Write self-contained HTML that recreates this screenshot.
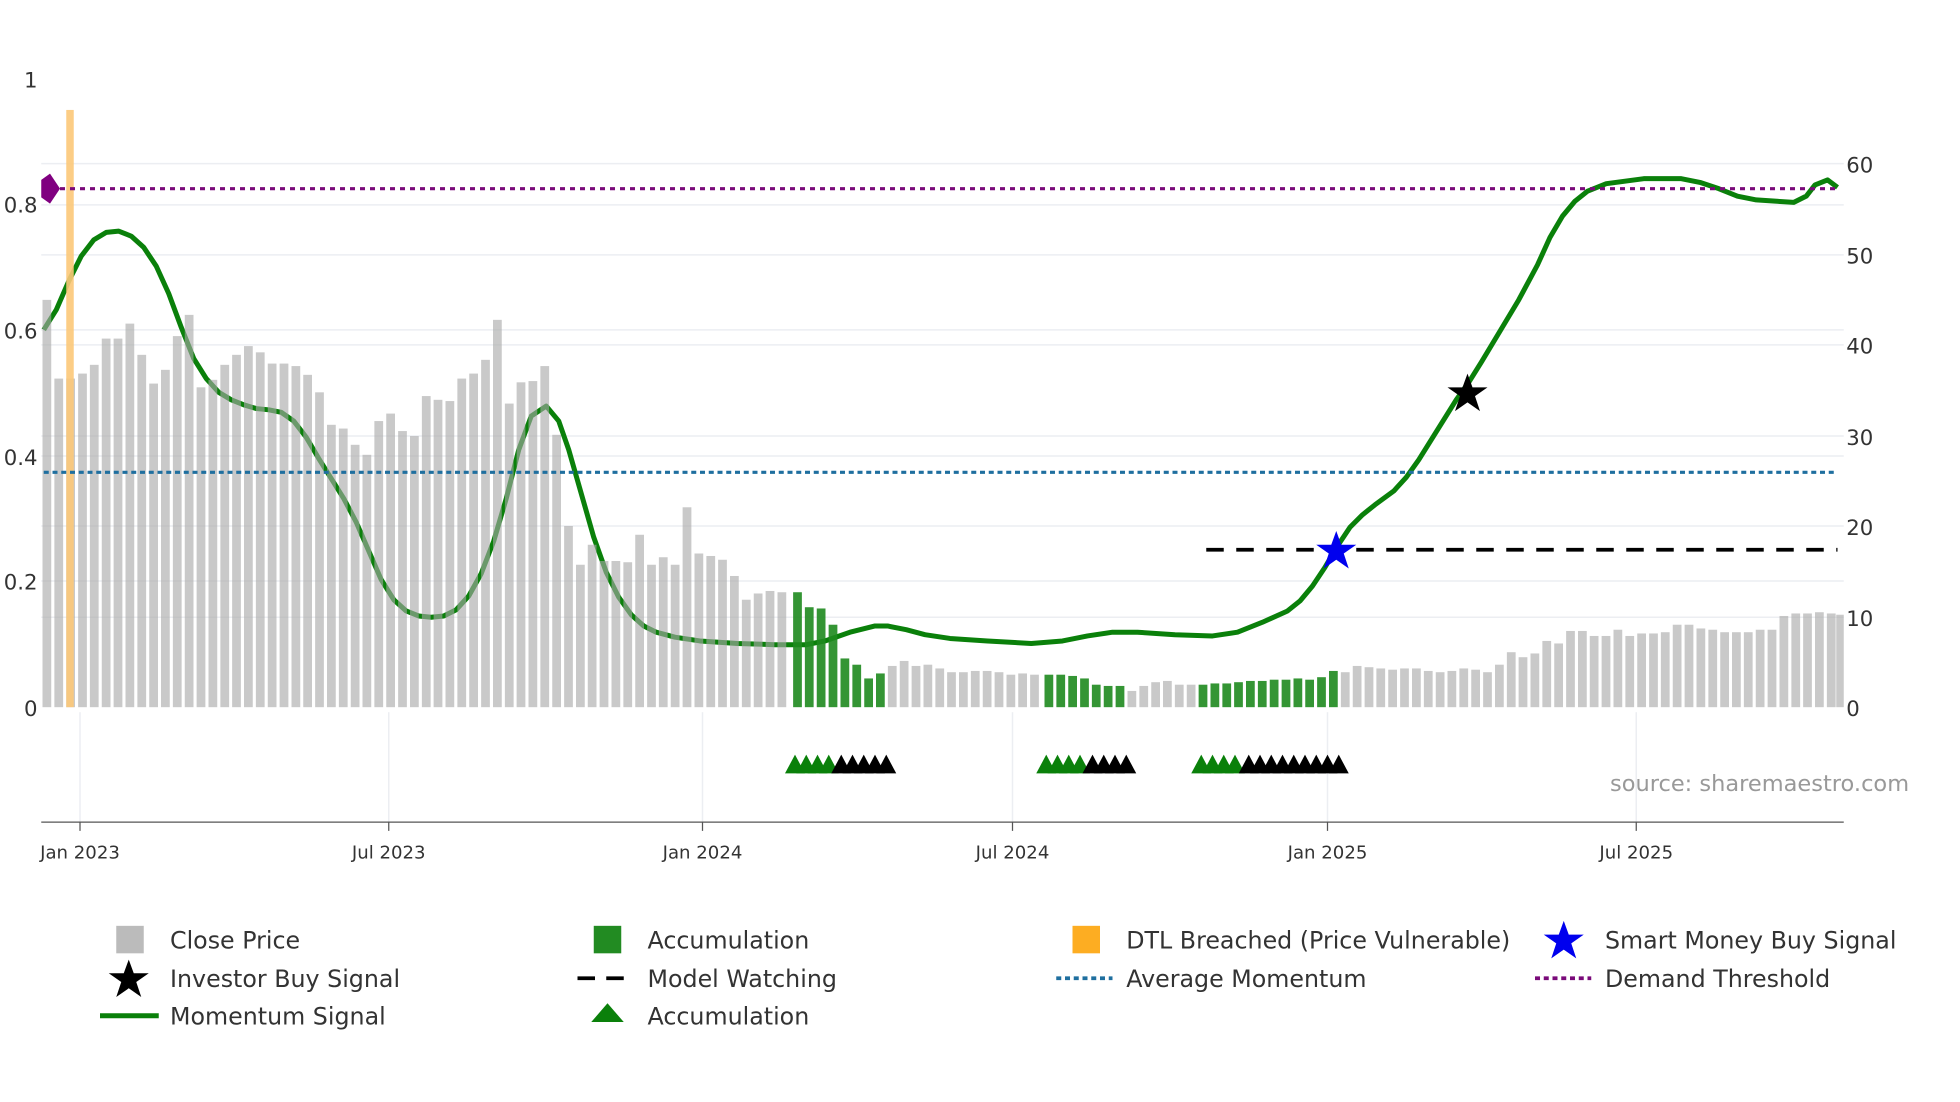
<!DOCTYPE html>
<html><head><meta charset="utf-8"><style>
html,body{margin:0;padding:0;background:#fff;}
svg{display:block;font-family:"DejaVu Sans","Liberation Sans",sans-serif;}
.g{fill:#a8a8a8;opacity:.62}.a{fill:#1e8a1e;opacity:.9}
</style></head><body>
<svg width="1960" height="1102" viewBox="0 0 1568 882" preserveAspectRatio="none" xmlns="http://www.w3.org/2000/svg">
<rect width="1568" height="882" fill="#fff"/>
<g stroke="#eceef2" stroke-width="1.2">
<line x1="33" x2="1475" y1="131" y2="131"/><line x1="33" x2="1475" y1="164" y2="164"/>
<line x1="33" x2="1475" y1="204" y2="204"/><line x1="33" x2="1475" y1="264" y2="264"/>
<line x1="33" x2="1475" y1="276" y2="276"/><line x1="33" x2="1475" y1="349" y2="349"/>
<line x1="33" x2="1475" y1="365" y2="365"/><line x1="33" x2="1475" y1="421" y2="421"/>
<line x1="33" x2="1475" y1="465" y2="465"/><line x1="33" x2="1475" y1="494" y2="494"/>
<line x1="64" x2="64" y1="570" y2="658"/><line x1="311" x2="311" y1="570" y2="658"/>
<line x1="562" x2="562" y1="570" y2="658"/><line x1="810" x2="810" y1="570" y2="658"/>
<line x1="1062" x2="1062" y1="570" y2="658"/><line x1="1309" x2="1309" y1="570" y2="658"/>
</g>
<path fill="none" stroke="#0a800a" stroke-width="4" stroke-linejoin="round" d="M35,264 L45,248 55,225 65,205 75,192 85,186 95,185 105,189 115,198 125,213 135,235 145,262 155,287 165,303 175,314 185,320 195,324 205,327 215,328 225,330 235,337 245,350 255,367 265,383 275,399 285,418 295,441 305,464 315,480 325,489 335,493 345,494 355,493 365,488 375,477 385,459 395,433 405,399 415,360 425,333 437,325 447,337 455,360 465,395 475,430 485,458 495,478 505,492 515,501 525,506 540,510 560,513 590,515 620,516 645,516 660,513 680,506 700,501 710,501 725,504 740,508 760,511 790,513 825,515 850,513 870,509 890,506 910,506 940,508 970,509 990,506 1010,498 1030,489 1040,481 1050,469 1060,454 1070,437 1080,422 1090,412 1100,404 1115,393 1125,382 1135,368 1145,352 1155,336 1165,320 1175,306 1185,290 1200,265 1215,240 1230,212 1240,190 1250,173 1260,161 1270,153 1285,147 1300,145 1315,143 1330,143 1345,143 1360,146 1375,151 1390,157 1405,160 1420,161 1435,162 1445,157 1452,148 1462,144 1470,150"/>
<g>
<rect class="g" width="7" x="34.0" y="240" height="326"/>
<rect class="g" width="7" x="43.5" y="303" height="263"/>
<rect class="g" width="7" x="53.0" y="303" height="263"/>
<rect class="g" width="7" x="62.5" y="299" height="267"/>
<rect class="g" width="7" x="71.9" y="292" height="274"/>
<rect class="g" width="7" x="81.4" y="271" height="295"/>
<rect class="g" width="7" x="90.9" y="271" height="295"/>
<rect class="g" width="7" x="100.4" y="259" height="307"/>
<rect class="g" width="7" x="109.9" y="284" height="282"/>
<rect class="g" width="7" x="119.4" y="307" height="259"/>
<rect class="g" width="7" x="128.8" y="296" height="270"/>
<rect class="g" width="7" x="138.3" y="269" height="297"/>
<rect class="g" width="7" x="147.8" y="252" height="314"/>
<rect class="g" width="7" x="157.3" y="310" height="256"/>
<rect class="g" width="7" x="166.8" y="304" height="262"/>
<rect class="g" width="7" x="176.3" y="292" height="274"/>
<rect class="g" width="7" x="185.7" y="284" height="282"/>
<rect class="g" width="7" x="195.2" y="277" height="289"/>
<rect class="g" width="7" x="204.7" y="282" height="284"/>
<rect class="g" width="7" x="214.2" y="291" height="275"/>
<rect class="g" width="7" x="223.7" y="291" height="275"/>
<rect class="g" width="7" x="233.2" y="293" height="273"/>
<rect class="g" width="7" x="242.6" y="300" height="266"/>
<rect class="g" width="7" x="252.1" y="314" height="252"/>
<rect class="g" width="7" x="261.6" y="340" height="226"/>
<rect class="g" width="7" x="271.1" y="343" height="223"/>
<rect class="g" width="7" x="280.6" y="356" height="210"/>
<rect class="g" width="7" x="290.0" y="364" height="202"/>
<rect class="g" width="7" x="299.5" y="337" height="229"/>
<rect class="g" width="7" x="309.0" y="331" height="235"/>
<rect class="g" width="7" x="318.5" y="345" height="221"/>
<rect class="g" width="7" x="328.0" y="349" height="217"/>
<rect class="g" width="7" x="337.5" y="317" height="249"/>
<rect class="g" width="7" x="346.9" y="320" height="246"/>
<rect class="g" width="7" x="356.4" y="321" height="245"/>
<rect class="g" width="7" x="365.9" y="303" height="263"/>
<rect class="g" width="7" x="375.4" y="299" height="267"/>
<rect class="g" width="7" x="384.9" y="288" height="278"/>
<rect class="g" width="7" x="394.4" y="256" height="310"/>
<rect class="g" width="7" x="403.9" y="323" height="243"/>
<rect class="g" width="7" x="413.3" y="306" height="260"/>
<rect class="g" width="7" x="422.8" y="305" height="261"/>
<rect class="g" width="7" x="432.3" y="293" height="273"/>
<rect class="g" width="7" x="441.8" y="348" height="218"/>
<rect class="g" width="7" x="451.3" y="421" height="145"/>
<rect class="g" width="7" x="460.8" y="452" height="114"/>
<rect class="g" width="7" x="470.2" y="436" height="130"/>
<rect class="g" width="7" x="479.7" y="449" height="117"/>
<rect class="g" width="7" x="489.2" y="449" height="117"/>
<rect class="g" width="7" x="498.7" y="450" height="116"/>
<rect class="g" width="7" x="508.2" y="428" height="138"/>
<rect class="g" width="7" x="517.7" y="452" height="114"/>
<rect class="g" width="7" x="527.1" y="446" height="120"/>
<rect class="g" width="7" x="536.6" y="452" height="114"/>
<rect class="g" width="7" x="546.1" y="406" height="160"/>
<rect class="g" width="7" x="555.6" y="443" height="123"/>
<rect class="g" width="7" x="565.1" y="445" height="121"/>
<rect class="g" width="7" x="574.5" y="448" height="118"/>
<rect class="g" width="7" x="584.0" y="461" height="105"/>
<rect class="g" width="7" x="593.5" y="480" height="86"/>
<rect class="g" width="7" x="603.0" y="475" height="91"/>
<rect class="g" width="7" x="612.5" y="473" height="93"/>
<rect class="g" width="7" x="622.0" y="474" height="92"/>
<rect class="a" width="7" x="634.5" y="474" height="92"/>
<rect class="a" width="7" x="643.9" y="486" height="80"/>
<rect class="a" width="7" x="653.4" y="487" height="79"/>
<rect class="a" width="7" x="662.9" y="500" height="66"/>
<rect class="a" width="7" x="672.4" y="527" height="39"/>
<rect class="a" width="7" x="681.9" y="532" height="34"/>
<rect class="a" width="7" x="691.4" y="543" height="23"/>
<rect class="a" width="7" x="700.8" y="539" height="27"/>
<rect class="g" width="7" x="710.3" y="533" height="33"/>
<rect class="g" width="7" x="719.8" y="529" height="37"/>
<rect class="g" width="7" x="729.3" y="533" height="33"/>
<rect class="g" width="7" x="738.8" y="532" height="34"/>
<rect class="g" width="7" x="748.3" y="535" height="31"/>
<rect class="g" width="7" x="757.7" y="538" height="28"/>
<rect class="g" width="7" x="767.2" y="538" height="28"/>
<rect class="g" width="7" x="776.7" y="537" height="29"/>
<rect class="g" width="7" x="786.2" y="537" height="29"/>
<rect class="g" width="7" x="795.7" y="538" height="28"/>
<rect class="g" width="7" x="805.2" y="540" height="26"/>
<rect class="g" width="7" x="814.6" y="539" height="27"/>
<rect class="g" width="7" x="824.1" y="540" height="26"/>
<rect class="a" width="7" x="835.6" y="540" height="26"/>
<rect class="a" width="7" x="845.1" y="540" height="26"/>
<rect class="a" width="7" x="854.6" y="541" height="25"/>
<rect class="a" width="7" x="864.1" y="543" height="23"/>
<rect class="a" width="7" x="873.5" y="548" height="18"/>
<rect class="a" width="7" x="883.0" y="549" height="17"/>
<rect class="a" width="7" x="892.5" y="549" height="17"/>
<rect class="g" width="7" x="902.0" y="553" height="13"/>
<rect class="g" width="7" x="911.5" y="549" height="17"/>
<rect class="g" width="7" x="921.0" y="546" height="20"/>
<rect class="g" width="7" x="930.4" y="545" height="21"/>
<rect class="g" width="7" x="939.9" y="548" height="18"/>
<rect class="g" width="7" x="949.4" y="548" height="18"/>
<rect class="a" width="7" x="958.9" y="548" height="18"/>
<rect class="a" width="7" x="968.4" y="547" height="19"/>
<rect class="a" width="7" x="977.9" y="547" height="19"/>
<rect class="a" width="7" x="987.3" y="546" height="20"/>
<rect class="a" width="7" x="996.8" y="545" height="21"/>
<rect class="a" width="7" x="1006.3" y="545" height="21"/>
<rect class="a" width="7" x="1015.8" y="544" height="22"/>
<rect class="a" width="7" x="1025.3" y="544" height="22"/>
<rect class="a" width="7" x="1034.8" y="543" height="23"/>
<rect class="a" width="7" x="1044.2" y="544" height="22"/>
<rect class="a" width="7" x="1053.7" y="542" height="24"/>
<rect class="a" width="7" x="1063.2" y="537" height="29"/>
<rect class="g" width="7" x="1072.7" y="538" height="28"/>
<rect class="g" width="7" x="1082.2" y="533" height="33"/>
<rect class="g" width="7" x="1091.7" y="534" height="32"/>
<rect class="g" width="7" x="1101.1" y="535" height="31"/>
<rect class="g" width="7" x="1110.6" y="536" height="30"/>
<rect class="g" width="7" x="1120.1" y="535" height="31"/>
<rect class="g" width="7" x="1129.6" y="535" height="31"/>
<rect class="g" width="7" x="1139.1" y="537" height="29"/>
<rect class="g" width="7" x="1148.6" y="538" height="28"/>
<rect class="g" width="7" x="1158.0" y="537" height="29"/>
<rect class="g" width="7" x="1167.5" y="535" height="31"/>
<rect class="g" width="7" x="1177.0" y="536" height="30"/>
<rect class="g" width="7" x="1186.5" y="538" height="28"/>
<rect class="g" width="7" x="1196.0" y="532" height="34"/>
<rect class="g" width="7" x="1205.5" y="522" height="44"/>
<rect class="g" width="7" x="1214.9" y="526" height="40"/>
<rect class="g" width="7" x="1224.4" y="523" height="43"/>
<rect class="g" width="7" x="1233.9" y="513" height="53"/>
<rect class="g" width="7" x="1243.4" y="515" height="51"/>
<rect class="g" width="7" x="1252.9" y="505" height="61"/>
<rect class="g" width="7" x="1262.4" y="505" height="61"/>
<rect class="g" width="7" x="1271.8" y="509" height="57"/>
<rect class="g" width="7" x="1281.3" y="509" height="57"/>
<rect class="g" width="7" x="1290.8" y="504" height="62"/>
<rect class="g" width="7" x="1300.3" y="509" height="57"/>
<rect class="g" width="7" x="1309.8" y="507" height="59"/>
<rect class="g" width="7" x="1319.3" y="507" height="59"/>
<rect class="g" width="7" x="1328.7" y="506" height="60"/>
<rect class="g" width="7" x="1338.2" y="500" height="66"/>
<rect class="g" width="7" x="1347.7" y="500" height="66"/>
<rect class="g" width="7" x="1357.2" y="503" height="63"/>
<rect class="g" width="7" x="1366.7" y="504" height="62"/>
<rect class="g" width="7" x="1376.2" y="506" height="60"/>
<rect class="g" width="7" x="1385.6" y="506" height="60"/>
<rect class="g" width="7" x="1395.1" y="506" height="60"/>
<rect class="g" width="7" x="1404.6" y="504" height="62"/>
<rect class="g" width="7" x="1414.1" y="504" height="62"/>
<rect class="g" width="7" x="1423.6" y="493" height="73"/>
<rect class="g" width="7" x="1433.1" y="491" height="75"/>
<rect class="g" width="7" x="1442.5" y="491" height="75"/>
<rect class="g" width="7" x="1452.0" y="490" height="76"/>
<rect class="g" width="7" x="1461.5" y="491" height="75"/>
<rect class="g" width="6" x="1469.0" y="492" height="74"/>
</g>
<rect x="53" y="88" width="6" height="478" fill="#fcc878" opacity="0.9"/>
<line x1="40" x2="1470" y1="151" y2="151" stroke="#7a0a7a" stroke-width="2.5" stroke-dasharray="4,4"/>
<path d="M40,139 L48,151 40,163 33,158 33,144Z" fill="#800080"/>
<line x1="35" x2="1470" y1="378" y2="378" stroke="#1f6f9f" stroke-width="2.5" stroke-dasharray="4,3"/>
<line x1="965" x2="1470" y1="440" y2="440" stroke="#000" stroke-width="3" stroke-dasharray="14,10"/>
<g>
<path d="M636,604 L644,619 628,619Z" fill="#0a800a"/><path d="M645,604 L653,619 637,619Z" fill="#0a800a"/><path d="M654,604 L662,619 646,619Z" fill="#0a800a"/><path d="M663,604 L671,619 655,619Z" fill="#0a800a"/>
<path d="M673,604 L681,619 665,619Z"/><path d="M682,604 L690,619 674,619Z"/><path d="M691,604 L699,619 683,619Z"/><path d="M700,604 L708,619 692,619Z"/><path d="M709,604 L717,619 701,619Z"/>
<path d="M837,604 L845,619 829,619Z" fill="#0a800a"/><path d="M846,604 L854,619 838,619Z" fill="#0a800a"/><path d="M855,604 L863,619 847,619Z" fill="#0a800a"/><path d="M864,604 L872,619 856,619Z" fill="#0a800a"/>
<path d="M874,604 L882,619 866,619Z"/><path d="M883,604 L891,619 875,619Z"/><path d="M892,604 L900,619 884,619Z"/><path d="M901,604 L909,619 893,619Z"/>
<path d="M961,604 L969,619 953,619Z" fill="#0a800a"/><path d="M970,604 L978,619 962,619Z" fill="#0a800a"/><path d="M979,604 L987,619 971,619Z" fill="#0a800a"/><path d="M988,604 L996,619 980,619Z" fill="#0a800a"/>
<path d="M999,604 L1007,619 991,619Z"/><path d="M1008,604 L1016,619 1000,619Z"/><path d="M1017,604 L1025,619 1009,619Z"/><path d="M1026,604 L1034,619 1018,619Z"/><path d="M1035,604 L1043,619 1027,619Z"/><path d="M1044,604 L1052,619 1036,619Z"/><path d="M1053,604 L1061,619 1045,619Z"/><path d="M1062,604 L1070,619 1054,619Z"/><path d="M1071,604 L1079,619 1063,619Z"/>
</g>
<path fill="#000" d="M1174,299 L1178,310 1190,310 1180,317 1184,329 1174,322 1164,329 1168,317 1158,310 1170,310Z"/>
<path fill="#0000ee" d="M1069,425 L1073,436 1085,436 1075,443 1079,455 1069,448 1059,455 1063,443 1053,436 1065,436Z"/>
<line x1="33" x2="1475" y1="658" y2="658" stroke="#555" stroke-width="1"/>
<g stroke="#555"><line x1="64" x2="64" y1="658" y2="665"/><line x1="311" x2="311" y1="658" y2="665"/><line x1="562" x2="562" y1="658" y2="665"/><line x1="810" x2="810" y1="658" y2="665"/><line x1="1062" x2="1062" y1="658" y2="665"/><line x1="1309" x2="1309" y1="658" y2="665"/></g>
<g fill="#333" font-size="17">
<text x="30" y="70" text-anchor="end">1</text>
<text x="30" y="170" text-anchor="end">0.8</text>
<text x="30" y="271" text-anchor="end">0.6</text>
<text x="30" y="372" text-anchor="end">0.4</text>
<text x="30" y="472" text-anchor="end">0.2</text>
<text x="30" y="573" text-anchor="end">0</text>
<text x="1477" y="138">60</text><text x="1477" y="211">50</text><text x="1477" y="283">40</text>
<text x="1477" y="356">30</text><text x="1477" y="428">20</text><text x="1477" y="501">10</text><text x="1477" y="573">0</text>
</g>
<g fill="#333" font-size="14.5" text-anchor="middle">
<text x="64" y="687">Jan 2023</text><text x="311" y="687">Jul 2023</text><text x="562" y="687">Jan 2024</text>
<text x="810" y="687">Jul 2024</text><text x="1062" y="687">Jan 2025</text><text x="1309" y="687">Jul 2025</text>
</g>
<text x="1288" y="633" fill="#999" font-size="18">source: sharemaestro.com</text>
<g font-size="19" fill="#333">
<rect x="93" y="741" width="22" height="22" fill="#bbb"/><text x="136" y="759">Close Price</text>
<rect x="475" y="741" width="22" height="22" fill="#228b22"/><text x="518" y="759">Accumulation</text>
<rect x="858" y="741" width="22" height="22" fill="#fdad22"/><text x="901" y="759">DTL Breached (Price Vulnerable)</text>
<path fill="#0000ee" d="M1251,737 L1255,748 1267,748 1257,755 1261,767 1251,760 1241,767 1245,755 1235,748 1247,748Z"/><text x="1284" y="759">Smart Money Buy Signal</text>
<path fill="#000" d="M103,768 L107,779 119,779 109,786 113,798 103,791 93,798 97,786 87,779 99,779Z"/><text x="136" y="790">Investor Buy Signal</text>
<line x1="462" x2="508" y1="783" y2="783" stroke="#000" stroke-width="3" stroke-dasharray="14,9"/><text x="518" y="790">Model Watching</text>
<line x1="845" x2="890" y1="783" y2="783" stroke="#1f6f9f" stroke-width="3" stroke-dasharray="4,3"/><text x="901" y="790">Average Momentum</text>
<line x1="1228" x2="1273" y1="783" y2="783" stroke="#7a0a7a" stroke-width="3" stroke-dasharray="4,3"/><text x="1284" y="790">Demand Threshold</text>
<line x1="80" x2="127" y1="813" y2="813" stroke="#0a800a" stroke-width="4"/><text x="136" y="820">Momentum Signal</text>
<path d="M486,803 L499,818 473,818Z" fill="#0a800a"/><text x="518" y="820">Accumulation</text>
</g>
</svg>
</body></html>
